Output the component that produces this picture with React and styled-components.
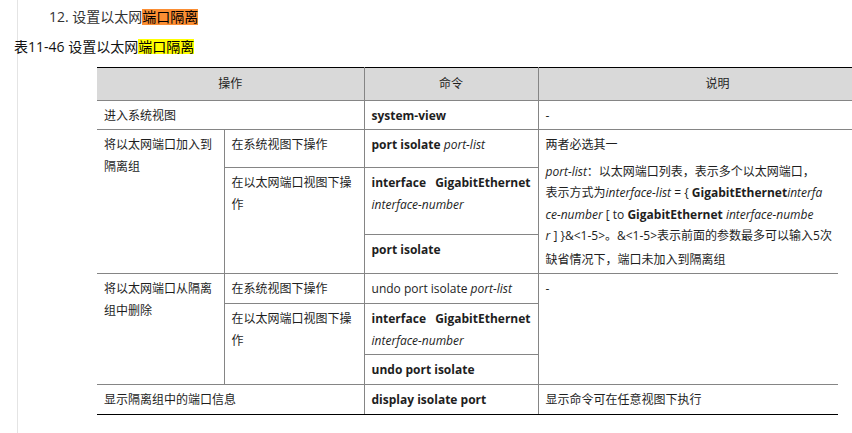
import React from 'react'
import styled, { createGlobalStyle } from 'styled-components'

const GlobalStyle = createGlobalStyle`
  html, body {
    margin: 0;
    padding: 0;
    background: #fff;
    overflow: hidden;
  }
  body {
    font-family: "Open Sans", "Noto Sans CJK SC", sans-serif;
    color: #1e1e1e;
  }
`

const Page = styled.div`
  margin-left: 17px;
  border-left: 1px solid #e4e4e4;
  min-height: 100vh;
  padding-top: 7px;
  box-sizing: border-box;
`

const Heading = styled.h4`
  margin: 0 0 0 31px;
  font-size: 14px;
  font-weight: normal;
  line-height: 20px;
  color: #333;
`

const Caption = styled.p`
  margin: 10px 0 0 -4px;
  font-size: 14px;
  line-height: 20px;
  color: #111;
`

const Mark = styled.span`
  display: inline-block;
  line-height: ${p => p.$h}px;
  background: ${p => p.$bg};
  color: #000;
`

const Table = styled.table`
  margin: 10px 0 0 79px;
  border-collapse: collapse;
  table-layout: fixed;
  width: 741px;
  font-size: 12px;
  line-height: 22px;
`

const Row = styled.tr`
  height: ${p => p.$h}px;
`

const Head = styled.th`
  background: #d9d9d9;
  font-weight: normal;
  border-top: 1px solid #000;
  border-bottom: 1px solid #858585;
  border-right: ${p => (p.$last ? 'none' : '1px solid #858585')};
  text-align: ${p => (p.$left ? 'left' : 'center')};
  padding: 0 0 0 ${p => (p.$left ? '167px' : '0')};
  vertical-align: middle;
  position: relative;
  ${p => p.$extend && `
    &::after {
      content: '';
      position: absolute;
      left: 100%;
      top: -1px;
      bottom: -1px;
      width: 40px;
      background: #d9d9d9;
      border-top: 1px solid #000;
      border-bottom: 1px solid #858585;
    }
  `}
`

const Cell = styled.td`
  vertical-align: top;
  padding: 4px 7px 0 7px;
  border-bottom: 1px solid ${p => (p.$end ? '#000' : '#858585')};
  border-right: ${p => (p.$last ? 'none' : '1px solid #858585')};
  text-align: ${p => (p.$justify ? 'justify' : 'left')};
  position: relative;
  ${p => p.$extend && `
    &::after {
      content: '';
      position: absolute;
      left: 100%;
      bottom: -1px;
      width: 40px;
      border-bottom: 1px solid #858585;
    }
  `}
`

const First = styled.div`
  line-height: 22px;
`

const Desc = styled.div`
  line-height: 21.4px;
  white-space: nowrap;
  margin-top: ${p => p.$gap}px;
`

const Cmd = styled.b`
  font-weight: 700;
`

const Arg = styled.i`
  font-style: italic;
`

const App = () => {
  return (
    <Page>
      <GlobalStyle />
      <Heading>
        12. 设置以太网<Mark $bg="#fb8e33" $h={16}>端口隔离</Mark>
      </Heading>
      <Caption>
        表11-46 设置以太网<Mark $bg="#ffff00" $h={15}>端口隔离</Mark>
      </Caption>
      <Table>
        <colgroup>
          <col style={{ width: 127 }} />
          <col style={{ width: 140 }} />
          <col style={{ width: 174 }} />
          <col style={{ width: 300 }} />
        </colgroup>
        <thead>
          <Row $h={33}>
            <Head colSpan={2}>操作</Head>
            <Head>命令</Head>
            <Head $last $left $extend>说明</Head>
          </Row>
        </thead>
        <tbody>
          <Row $h={29}>
            <Cell colSpan={2}>进入系统视图</Cell>
            <Cell><Cmd>system-view</Cmd></Cell>
            <Cell $last $extend>-</Cell>
          </Row>
          <Row $h={38}>
            <Cell rowSpan={3}>将以太网端口加入到隔离组</Cell>
            <Cell>在系统视图下操作</Cell>
            <Cell><Cmd>port isolate</Cmd> <Arg>port-list</Arg></Cell>
            <Cell rowSpan={3} $last>
              <First>两者必选其一</First>
              <Desc $gap={5}>
                <Arg>port-list</Arg>：以太网端口列表，表示多个以太网端口，<br />
                表示方式为<Arg>interface-list</Arg> = {'{'} <Cmd>GigabitEthernet</Cmd><Arg>interfa</Arg><br />
                <Arg>ce-number</Arg> [ to <Cmd>GigabitEthernet</Cmd> <Arg>interface-numbe</Arg><br />
                <Arg>r</Arg> ] {'}'}&amp;&lt;1-5&gt;。&amp;&lt;1-5&gt;表示前面的参数最多可以输入5次
              </Desc>
              <Desc $gap={2}>缺省情况下，端口未加入到隔离组</Desc>
            </Cell>
          </Row>
          <Row $h={67}>
            <Cell rowSpan={2}>在以太网端口视图下操作</Cell>
            <Cell $justify><Cmd>interface GigabitEthernet</Cmd> <Arg>interface-number</Arg></Cell>
          </Row>
          <Row $h={39}>
            <Cell><Cmd>port isolate</Cmd></Cell>
          </Row>
          <Row $h={30}>
            <Cell rowSpan={3}>将以太网端口从隔离组中删除</Cell>
            <Cell>在系统视图下操作</Cell>
            <Cell>undo port isolate <Arg>port-list</Arg></Cell>
            <Cell rowSpan={3} $last>-</Cell>
          </Row>
          <Row $h={51}>
            <Cell rowSpan={2}>在以太网端口视图下操作</Cell>
            <Cell $justify><Cmd>interface GigabitEthernet</Cmd> <Arg>interface-number</Arg></Cell>
          </Row>
          <Row $h={30}>
            <Cell><Cmd>undo port isolate</Cmd></Cell>
          </Row>
          <Row $h={30}>
            <Cell colSpan={2} $end>显示隔离组中的端口信息</Cell>
            <Cell $end><Cmd>display isolate port</Cmd></Cell>
            <Cell $end $last>显示命令可在任意视图下执行</Cell>
          </Row>
        </tbody>
      </Table>
    </Page>
  )
}

export default App
